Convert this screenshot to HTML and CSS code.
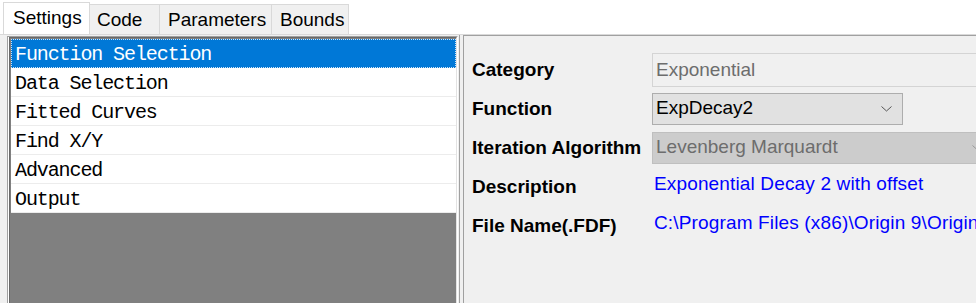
FILE: index.html
```html
<!DOCTYPE html>
<html lang="en">
<head>
    <meta charset="UTF-8">
    <title>Fitting Function Settings</title>
    <link rel="stylesheet" href="styles.css">
</head>
<body>

<div class="tabs">
    <div class="tab tab-settings active">Settings</div>
    <div class="tab tab-code">Code</div>
    <div class="tab tab-params">Parameters</div>
    <div class="tab tab-bounds">Bounds</div>
</div>

<div class="main">
    <!-- tree of setting pages -->
    <div class="list-box">
        <div class="list-inner">
            <div class="list-item selected">Function Selection</div>
            <div class="list-item">Data Selection</div>
            <div class="list-item">Fitted Curves</div>
            <div class="list-item">Find X/Y</div>
            <div class="list-item">Advanced</div>
            <div class="list-item">Output</div>
        </div>
    </div>

    <div class="splitter"></div>

    <!-- page content -->
    <div class="panel">
        <div class="form-row">
            <div class="label">Category</div>
            <div class="field disabled">Exponential</div>
        </div>
        <div class="form-row">
            <div class="label">Function</div>
            <div class="combo">
                <span>ExpDecay2</span>
                <svg class="chevron" width="11" height="6" viewBox="0 0 11 6"><polyline points="0.5,0.5 5.5,5 10.5,0.5" fill="none" stroke="#555" stroke-width="1"/></svg>
            </div>
        </div>
        <div class="form-row">
            <div class="label">Iteration Algorithm</div>
            <div class="combo combo-disabled">
                <span>Levenberg Marquardt</span>
                <svg class="chevron" width="11" height="6" viewBox="0 0 11 6"><polyline points="0.5,0.5 5.5,5 10.5,0.5" fill="none" stroke="#999" stroke-width="1"/></svg>
            </div>
        </div>
        <div class="form-row">
            <div class="label">Description</div>
            <div class="info">Exponential Decay 2 with offset</div>
        </div>
        <div class="form-row">
            <div class="label">File Name(.FDF)</div>
            <div class="info">C:\Program Files (x86)\Origin 9\OriginLab\FitFunc\ExpDecay2.FDF</div>
        </div>
    </div>
</div>

</body>
</html>
```

FILE: styles.css
```css
body {
    margin: 0;
    width: 976px;
    height: 303px;
    overflow: hidden;
    background-color: #fff;
    font-family: "Liberation Sans", Arial, sans-serif;
    font-size: 19px;
    color: #000;
}

/* tab strip */
.tabs {
    display: flex;
    align-items: flex-end;
    height: 34px;
    padding-left: 3px;
}
.tab {
    box-sizing: border-box;
    height: 30px;
    line-height: 29px;
    padding-left: 7px;
    border: 1px solid #d9d9d9;
    border-bottom: none;
    margin-left: -1px;
    background-color: #f0f0f0;
    white-space: nowrap;
}
.tab.active {
    height: 32px;
    line-height: 30px;
    padding-left: 9px;
    background-color: #fff;
    position: relative;
    z-index: 1;
    margin-left: 0;
}
.tab-settings { width: 87px; }
.tab-code { width: 71px; }
.tab-params { width: 113px; padding-left: 8px; }
.tab-bounds { width: 78px; padding-left: 8px; }

.main {
    display: flex;
    height: 269px;
    background-color: #f0f0f0;
    border-top: 1px solid #d9d9d9;
}

/* left list */
.list-box {
    box-sizing: border-box;
    width: 451px;
    margin: 1px 0 0 7px;
    border-top: 1px solid #a0a0a0;
    border-left: 1px solid #a0a0a0;
    border-right: 1px solid #fff;
    background-color: #fff;
}
.list-inner {
    height: 100%;
    margin-left: 1px;
    border-top: 1px solid #696969;
    border-left: 1px solid #696969;
    border-right: 1px solid #e3e3e3;
    background-color: #808080;
}
.list-item {
    box-sizing: border-box;
    height: 29px;
    line-height: 28px;
    padding: 2px 0 0 4px;
    margin-left: 1px;
    background-color: #fff;
    border-bottom: 1px solid #ececec;
    font-family: "Liberation Mono", "Courier New", monospace;
    font-size: 20px;
    letter-spacing: -1.1px;
    color: #000;
    white-space: nowrap;
    overflow: hidden;
}
.list-item.selected {
    margin-top: 1px;
    height: 29px;
    background-color: #0078d7;
    color: #fff;
    border: 1px dotted #cfe4f7;
    padding: 2px 0 0 3px;
    line-height: 25px;
}

.splitter {
    width: 3px;
    margin-left: 1px;
    border-left: 1px solid #a0a0a0;
}

/* right panel */
.panel {
    flex: 1;
    border-left: 1px solid #a0a0a0;
    border-top: 1px solid #a0a0a0;
    padding: 14px 0 0 8px;
    overflow: hidden;
}
.form-row {
    display: grid;
    grid-template-columns: 180px auto;
    align-items: center;
    height: 39px;
}
.label {
    font-weight: bold;
    white-space: nowrap;
}
.field {
    box-sizing: border-box;
    width: 340px;
    height: 34px;
    line-height: 31px;
    padding-left: 3px;
    border: 1px solid #d4d4d4;
    background-color: #f0f0f0;
    white-space: nowrap;
}
.field.disabled {
    color: #6d6d6d;
}
.combo {
    box-sizing: border-box;
    display: flex;
    align-items: center;
    justify-content: space-between;
    width: 251px;
    height: 32px;
    padding: 0 10px 0 3px;
    border: 1px solid #adadad;
    background-color: #e1e1e1;
    white-space: nowrap;
}
.combo span {
    position: relative;
    top: -1px;
}
.combo-disabled {
    width: 342px;
    border-color: #bfbfbf;
    background-color: #cccccc;
    color: #6d6d6d;
}
.chevron {
    flex-shrink: 0;
}
.info {
    color: #0000ff;
    padding: 0 0 6px 2px;
    white-space: nowrap;
    letter-spacing: 0.15px;
}
```
